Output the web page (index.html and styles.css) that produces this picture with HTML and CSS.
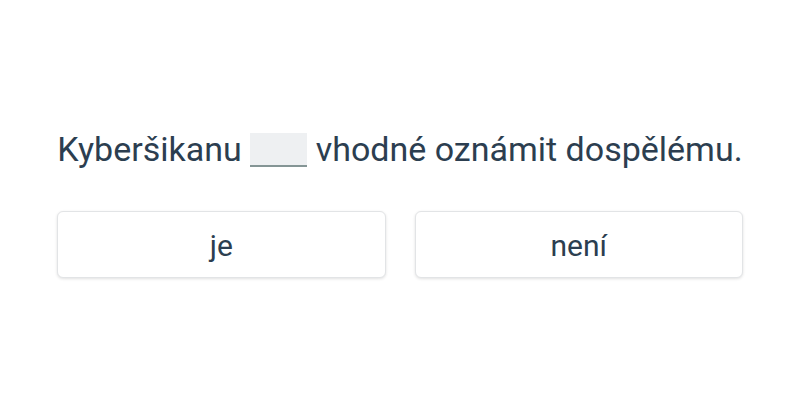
FILE: index.html
```html
<!DOCTYPE html>
<html lang="cs">
<head>
    <meta charset="UTF-8">
    <meta name="viewport" content="width=device-width, initial-scale=1.0">
    <title>Doplň slovo</title>
    <link rel="stylesheet" href="styles.css">
</head>
<body>
    <div class="quiz">
        <p class="question">Kyberšikanu <span class="blank"></span> vhodné oznámit dospělému.</p>
        <div class="answers">
            <button class="answer">je</button>
            <button class="answer">není</button>
        </div>
    </div>
</body>
</html>
```

FILE: styles.css
```css
body {
    margin: 0;
    padding: 0;
    height: 100vh;
    display: flex;
    justify-content: center;
    align-items: center;
    background-color: #fff;
    font-family: Roboto, "Liberation Sans", sans-serif;
    color: #2c3e50;
}
.quiz {
    width: 686px;
    margin-top: 4px;
}
.question {
    margin: 0 0 40px 0;
    font-size: 34px;
    line-height: 44px;
    text-align: center;
}
.blank {
    display: inline-block;
    width: 57px;
    height: 32px;
    vertical-align: -6px;
    background-color: #eef0f2;
    border-bottom: 2px solid #849595;
}
.answers {
    display: grid;
    grid-template-columns: 1fr 1fr;
    gap: 29px;
}
.answer {
    height: 67px;
    padding-top: 3px;
    font-family: Roboto, "Liberation Sans", sans-serif;
    font-size: 30px;
    color: #2c3e50;
    background-color: #fff;
    border: 1px solid #e2e4e6;
    border-radius: 6px;
    box-shadow: 0 1px 3px rgba(0,0,0,0.12);
    cursor: pointer;
}
.answer:hover {
    background-color: #f7f8f9;
}
```
